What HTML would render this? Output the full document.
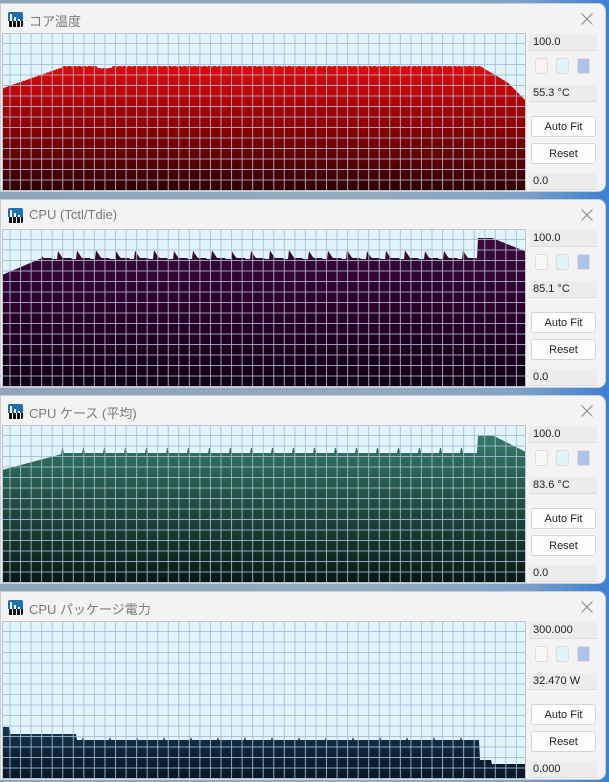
<!DOCTYPE html>
<html><head><meta charset="utf-8"><style>
body{margin:0;width:609px;height:782px;overflow:hidden;background:linear-gradient(90deg,#8ea5ba 0%,#93aabd 60%,#7fa3c8 85%,#3d7fd0 100%);font-family:"Liberation Sans","Noto Sans CJK JP",sans-serif;position:relative}
.win{position:absolute;left:0;width:606px;background:#f3f3f3;border-radius:0 8px 8px 0;border:1px solid #c9cfd6;box-sizing:border-box;overflow:hidden}
.title{position:absolute;left:28px;top:7px;font-size:13px;color:#7a7a7a}
.icon{position:absolute;left:7px;top:8px;width:15px;height:15px;background:#1e6fb8;border-radius:2px;overflow:hidden}
.icon:after{content:"";position:absolute;left:0;bottom:0;width:15px;height:6px;background:repeating-linear-gradient(90deg,#fff 0 1px,#111 1px 4px)}
.icon i{position:absolute;bottom:6px;width:2px;background:#fff}
.close{position:absolute;right:12px;top:9px}
svg.chart{position:absolute;left:1px;top:29px}
.box{position:absolute;left:528px;width:68px;height:17px;background:#ececec;border-bottom:1px solid #ddd;font-size:11px;color:#222;line-height:17px;padding-left:4px;box-sizing:border-box}
.sw{position:absolute;width:11px;height:14px;border:1px solid #ddd;border-radius:2px}
.btn{position:absolute;left:530px;width:65px;height:21px;background:#fdfdfd;border:1px solid #d6d6d6;border-radius:3px;font-size:11px;color:#222;text-align:center;line-height:21px;box-sizing:border-box}
</style></head><body>
<div id="root"></div>
<script>
const wins=[
 {top:3,h:189,title:"コア温度",max:"100.0",val:"55.3 °C",min:"0.0",fill:["#e00a0a","#8a0000","#2e0000"]},
 {top:199,h:189,title:"CPU (Tctl/Tdie)",max:"100.0",val:"85.1 °C",min:"0.0",fill:["#3b0a3a","#2a0028","#120012"]},
 {top:395,h:189,title:"CPU ケース (平均)",max:"100.0",val:"83.6 °C",min:"0.0",fill:["#347a68","#1f4a3e","#081812"]},
 {top:591,h:189,title:"CPU パッケージ電力",max:"300.000",val:"32.470 W",min:"0.000",fill:["#163850","#0d2436","#081624"]}
];
function curve(i,x){
 if(i==0){ if(x<60) return 88-(x/60)*21+((x*7)%3)*0.5; if(x<478) return 66+((x*13)%5<1?1:0)+(x>95&&x<110?2:0); let t=(x-478)/47; return 66+t*28+(t>0.6?(t-0.6)*20:0);}
 if(i==1){ if(x<40) return 275-(x/40)*17; if(x>=476) return x<490?238:238+(x-490)*0.4;
   let p=(x-36)%19.3; return 258-Math.max(0,8-p*1.5)+ (p>14?1:0);}
 if(i==2){ if(x<60) return 470-(x/60)*16; if(x>=476) return x<490?435:435+(x-490)*0.5;
   let p=(x-60)%21; return 453-(p<1.5?5:0);}
 if(i==3){ if(x<8) return 106; if(x<75) return 113; if(x<478) return 119-((x%27)<1?3:0); return x<490?139:143;}
}
let html="";
wins.forEach((w,i)=>{
 const H=w.h-31, W=524;
 let pts="0,"+H+" ";
 for(let x=0;x<=W;x++){let y=curve(i,x); if(i<3) y=y-(i==0?33:i==1?229:425); pts+=x+","+Math.min(H,Math.max(0,y)).toFixed(1)+" ";}
 pts+=W+","+H;
 let grid="";
 for(let gx=8;gx<W;gx+=10.55) grid+=`<line x1="${gx}" y1="0" x2="${gx}" y2="${H}"/>`;
 for(let gy=H-0.5;gy>0;gy-=10.5) grid+=`<line x1="0" y1="${gy}" x2="${W}" y2="${gy}"/>`;
 html+=`<div class="win" style="top:${w.top}px;height:${w.h}px">
 <div class="icon"><i style="left:2px;height:7px"></i><i style="left:6px;height:4px"></i><i style="left:10px;height:2px"></i></div>
 <div class="title">${w.title}</div>
 <svg class="close" width="12" height="12" viewBox="0 0 12 12"><path d="M0.5 0.5L11.5 11.5M11.5 0.5L0.5 11.5" stroke="#888" stroke-width="1"/></svg>
 <svg class="chart" width="${W}" height="${H}" viewBox="0 0 ${W} ${H}">
 <defs><linearGradient id="g${i}" x1="0" y1="0" x2="0" y2="1"><stop offset="0" stop-color="${w.fill[0]}"/><stop offset="0.5" stop-color="${w.fill[1]}"/><stop offset="1" stop-color="${w.fill[2]}"/></linearGradient></defs>
 <rect width="${W}" height="${H}" fill="#dff4fb"/>
 <polygon points="${pts}" fill="url(#g${i})"/>
 <g stroke="#aab9d8" stroke-opacity="0.85" stroke-width="1">${grid}</g>
 <rect x="0.5" y="0.5" width="${W-1}" height="${H-1}" fill="none" stroke="#b8c4d0"/>
 </svg>
 <div class="box" style="top:30px">${w.max}</div>
 <div class="sw" style="left:534px;top:54px;background:${i==0?'#fdf1f1':'#f8f8f8'}"></div>
 <div class="sw" style="left:555px;top:54px;background:#dff4fb"></div>
 <div class="sw" style="left:576px;top:54px;background:#aac3e6"></div>
 <div class="box" style="top:81px">${w.val}</div>
 <div class="btn" style="top:112px">Auto Fit</div>
 <div class="btn" style="top:139px">Reset</div>
 <div class="box" style="top:169px">${w.min}</div>
 </div>`;
});
document.getElementById("root").innerHTML=html;
</script>
</body></html>
